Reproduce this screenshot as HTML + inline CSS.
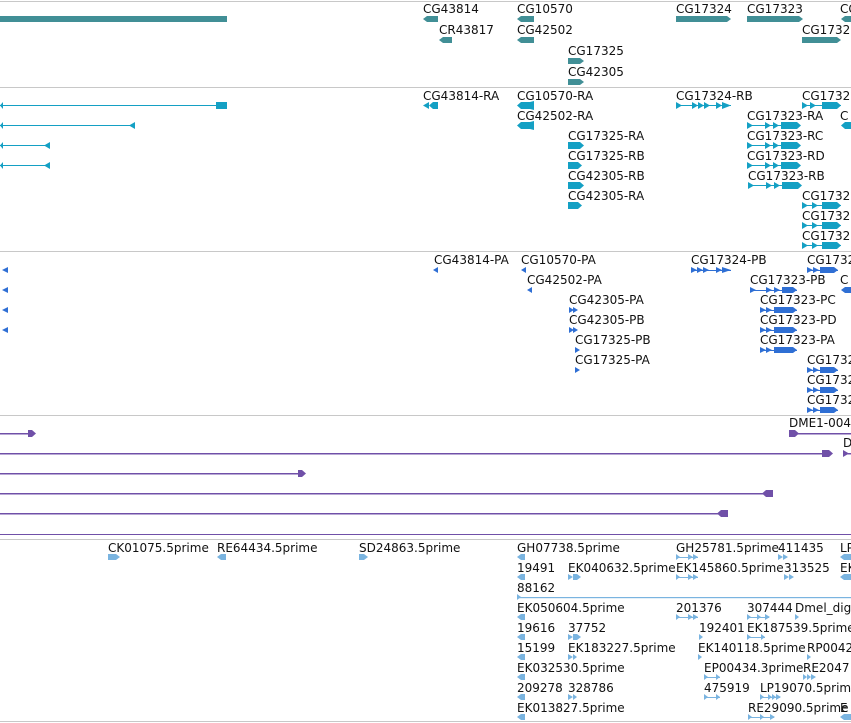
<!DOCTYPE html>
<html><head><meta charset="utf-8"><style>
html,body{margin:0;padding:0;background:#fff;width:851px;height:723px;overflow:hidden}
svg{display:block}
text{font-family:"DejaVu Sans","Liberation Sans",sans-serif;font-size:12px;fill:#111}
</style></head><body>
<svg width="851" height="723" viewBox="0 0 851 723">
<!-- separators -->
<g fill="#c8c8c8">
<rect x="0" y="1" width="851" height="1"/>
<rect x="0" y="87" width="851" height="1"/>
<rect x="0" y="251" width="851" height="1"/>
<rect x="0" y="415" width="851" height="1"/>
<rect x="0" y="539" width="851" height="1"/>
<rect x="0" y="721" width="851" height="1"/>
</g>
<rect x="0" y="534" width="851" height="1" fill="#7050a8"/>

<!-- gene track -->
<g fill="#418f96">
<rect x="0" y="16" width="227" height="6"/>
<polygon points="423,19 427,16 438,16 438,22 427,22"/>
<polygon points="439,40 443,37 452,37 452,43 443,43"/>
<polygon points="517,19 521,16 534,16 534,22 521,22"/>
<polygon points="517,40 521,37 534,37 534,43 521,43"/>
<polygon points="568,58 580,58 584,61 580,64 568,64"/>
<polygon points="568,79 580,79 584,82 580,85 568,85"/>
<polygon points="676,16 727,16 731,19 727,22 676,22"/>
<polygon points="747,16 799,16 803,19 799,22 747,22"/>
<polygon points="841,19 845,16 851,16 851,22 845,22"/>
<polygon points="802,37 837,37 841,40 837,43 802,43"/>
</g>
<text x="423" y="13">CG43814</text>
<text x="439" y="34">CR43817</text>
<text x="517" y="13">CG10570</text>
<text x="517" y="34">CG42502</text>
<text x="568" y="55">CG17325</text>
<text x="568" y="76">CG42305</text>
<text x="676" y="13">CG17324</text>
<text x="747" y="13">CG17323</text>
<text x="840" y="13">CG</text>
<text x="802" y="34">CG1732</text>

<!-- transcript track -->
<g fill="#14a0c4" stroke="none">
<rect x="0" y="105" width="216" height="1"/><rect x="216" y="102" width="11" height="7"/><polygon points="3,102 3,109 0,105.5"/>
<rect x="0" y="125" width="135" height="1"/><polygon points="129,125.5 135,122 135,129"/><polygon points="3,122 3,129 0,125.5"/>
<rect x="0" y="145" width="50" height="1"/><polygon points="44,145.5 50,142 50,149"/><polygon points="3,142 3,149 0,145.5"/>
<rect x="0" y="165" width="50" height="1"/><polygon points="44,165.5 50,162 50,169"/><polygon points="3,162 3,169 0,165.5"/>
<polygon points="423,105.5 429,102 429,109"/><polygon points="429,105.5 433,102 438,102 438,109 433,109"/>
<polygon points="517,105.5 521,102 530,102 534,101 534,110 530,109 521,109"/>
<polygon points="517,125.5 521,122 530,122 534,121 534,130 530,129 521,129"/>
<polygon points="568,142 580,142 584,145.5 580,149 568,149"/>
<polygon points="568,162 578,162 582,165.5 578,169 568,169"/>
<polygon points="568,182 580,182 584,185.5 580,189 568,189"/>
<polygon points="568,202 578,202 582,205.5 578,209 568,209"/>
<rect x="676" y="105" width="55" height="1"/>
<polygon points="676,102 682,105.5 676,109"/><polygon points="692,102 698,105.5 692,109"/><polygon points="698,102 704,105.5 698,109"/><polygon points="704,102 710,105.5 704,109"/><polygon points="716,102 722,105.5 716,109"/><polygon points="722,102 731,105.5 722,109"/>
<rect x="802" y="105" width="39" height="1"/><polygon points="802,102 808,105.5 802,109"/><polygon points="810,102 816,105.5 810,109"/><polygon points="822,102 837,102 841,105.5 837,109 822,109"/>
<polygon points="841,125.5 845,122 851,122 851,129 845,129"/>
</g>
<g fill="#14a0c4">
<rect x="747" y="125" width="50" height="1"/><polygon points="747,122 753,125.5 747,129"/><polygon points="765,122 771,125.5 765,129"/><polygon points="773,122 779,125.5 773,129"/><polygon points="781,122 797,122 801,125.5 797,129 781,129"/>
<rect x="747" y="145" width="50" height="1"/><polygon points="747,142 753,145.5 747,149"/><polygon points="765,142 771,145.5 765,149"/><polygon points="773,142 779,145.5 773,149"/><polygon points="781,142 797,142 801,145.5 797,149 781,149"/>
<rect x="747" y="165" width="50" height="1"/><polygon points="747,162 753,165.5 747,169"/><polygon points="765,162 771,165.5 765,169"/><polygon points="773,162 779,165.5 773,169"/><polygon points="781,162 797,162 801,165.5 797,169 781,169"/>
<rect x="748" y="185" width="50" height="1"/><polygon points="748,182 754,185.5 748,189"/><polygon points="766,182 772,185.5 766,189"/><polygon points="774,182 780,185.5 774,189"/><polygon points="782,182 798,182 802,185.5 798,189 782,189"/>
<rect x="802" y="205" width="39" height="1"/><polygon points="802,202 808,205.5 802,209"/><polygon points="812,202 818,205.5 812,209"/><polygon points="822,202 837,202 841,205.5 837,209 822,209"/>
<rect x="802" y="225" width="39" height="1"/><polygon points="802,222 808,225.5 802,229"/><polygon points="812,222 818,225.5 812,229"/><polygon points="822,222 837,222 841,225.5 837,229 822,229"/>
<rect x="802" y="245" width="39" height="1"/><polygon points="802,242 808,245.5 802,249"/><polygon points="812,242 818,245.5 812,249"/><polygon points="822,242 837,242 841,245.5 837,249 822,249"/>
</g>
<text x="423" y="100">CG43814-RA</text>
<text x="517" y="100">CG10570-RA</text>
<text x="517" y="120">CG42502-RA</text>
<text x="568" y="140">CG17325-RA</text>
<text x="568" y="160">CG17325-RB</text>
<text x="568" y="180">CG42305-RB</text>
<text x="568" y="200">CG42305-RA</text>
<text x="676" y="100">CG17324-RB</text>
<text x="802" y="100">CG1732</text>
<text x="747" y="120">CG17323-RA</text>
<text x="840" y="120">C</text>
<text x="747" y="140">CG17323-RC</text>
<text x="747" y="160">CG17323-RD</text>
<text x="748" y="180">CG17323-RB</text>
<text x="802" y="200">CG1732</text>
<text x="802" y="220">CG1732</text>
<text x="802" y="240">CG1732</text>

<!-- protein track -->
<g fill="#2f6fd4">
<polygon points="2,270 8,267 8,273"/><polygon points="2,290 8,287 8,293"/><polygon points="2,310 8,307 8,313"/><polygon points="2,330 8,327 8,333"/>
<polygon points="433,270 438,267 438,273"/>
<polygon points="521,270 526,267 526,273"/>
<polygon points="527,290 532,287 532,293"/>
<polygon points="569,307 574,310 569,313"/><polygon points="573,307 578,310 573,313"/>
<polygon points="569,327 574,330 569,333"/><polygon points="573,327 578,330 573,333"/>
<polygon points="575,347 580,350 575,353"/>
<polygon points="575,367 580,370 575,373"/>
<rect x="691" y="270" width="40" height="1"/>
<polygon points="691,267 697,270 691,273"/><polygon points="697,267 703,270 697,273"/><polygon points="703,267 709,270 703,273"/><polygon points="716,267 722,270 716,273"/><polygon points="722,267 731,270 722,273"/>
<rect x="807" y="270" width="31" height="1"/><polygon points="807,267 813,270 807,273"/><polygon points="813,267 819,270 813,273"/><polygon points="820,267 834,267 838,270 834,273 820,273"/>
<polygon points="841,290 845,287 851,287 851,293 845,293"/>
<rect x="750" y="290" width="47" height="1"/><polygon points="750,287 756,290 750,293"/><polygon points="766,287 772,290 766,293"/><polygon points="774,287 780,290 774,293"/><polygon points="782,287 793,287 797,290 793,293 782,293"/>
<rect x="760" y="310" width="37" height="1"/><polygon points="760,307 766,310 760,313"/><polygon points="766,307 772,310 766,313"/><polygon points="774,307 793,307 793,307 797,310 793,313 774,313"/>
<rect x="760" y="330" width="37" height="1"/><polygon points="760,327 766,330 760,333"/><polygon points="766,327 772,330 766,333"/><polygon points="774,327 793,327 797,330 793,333 774,333"/>
<rect x="760" y="350" width="37" height="1"/><polygon points="760,347 766,350 760,353"/><polygon points="766,347 772,350 766,353"/><polygon points="774,347 793,347 797,350 793,353 774,353"/>
<rect x="807" y="370" width="31" height="1"/><polygon points="807,367 813,370 807,373"/><polygon points="813,367 819,370 813,373"/><polygon points="820,367 834,367 838,370 834,373 820,373"/>
<rect x="807" y="390" width="31" height="1"/><polygon points="807,387 813,390 807,393"/><polygon points="813,387 819,390 813,393"/><polygon points="820,387 834,387 838,390 834,393 820,393"/>
<rect x="807" y="410" width="31" height="1"/><polygon points="807,407 813,410 807,413"/><polygon points="813,407 819,410 813,413"/><polygon points="820,407 834,407 838,410 834,413 820,413"/>
</g>
<text x="434" y="264">CG43814-PA</text>
<text x="521" y="264">CG10570-PA</text>
<text x="527" y="284">CG42502-PA</text>
<text x="569" y="304">CG42305-PA</text>
<text x="569" y="324">CG42305-PB</text>
<text x="575" y="344">CG17325-PB</text>
<text x="575" y="364">CG17325-PA</text>
<text x="691" y="264">CG17324-PB</text>
<text x="807" y="264">CG1732</text>
<text x="840" y="284">C</text>
<text x="750" y="284">CG17323-PB</text>
<text x="760" y="304">CG17323-PC</text>
<text x="760" y="324">CG17323-PD</text>
<text x="760" y="344">CG17323-PA</text>
<text x="807" y="364">CG1732</text>
<text x="807" y="384">CG1732</text>
<text x="807" y="404">CG1732</text>

<!-- purple track -->
<g fill="#7050a8">
<rect x="0" y="433" width="30" height="1.5"/><polygon points="28,430 32,430 36,433.5 32,437 28,437"/>
<rect x="789" y="433" width="62" height="1.5"/><polygon points="789,430 795,430 799,433.5 795,437 789,437"/>
<rect x="0" y="453" width="828" height="1.5"/><polygon points="822,450 829,450 833,453.5 829,457 822,457"/>
<polygon points="843,450 849,453.5 843,457"/><rect x="843" y="453" width="8" height="1.5"/>
<rect x="0" y="473" width="302" height="1.5"/><polygon points="298,470 302,470 306,473.5 302,477 298,477"/>
<rect x="0" y="493" width="765" height="1.5"/><polygon points="762,493.5 766,490 773,490 773,497 766,497"/>
<rect x="0" y="513" width="722" height="1.5"/><polygon points="717,513.5 721,510 728,510 728,517 721,517"/>
</g>
<text x="789" y="427">DME1-004</text>
<text x="843" y="447">D</text>

<!-- EST track -->
<g fill="#7ab4e0">
<polygon points="108,554 116,554 120,557 116,560 108,560"/>
<polygon points="217,557 221,554 226,554 226,560 221,560"/>
<polygon points="359,554 364,554 368,557 364,560 359,560"/>
<polygon points="517,557 521,554 525,554 525,560 521,560"/>
<rect x="676" y="557" width="22" height="1"/><polygon points="676,554 680,557 676,560"/><polygon points="688,554 693,557 688,560"/><polygon points="693,554 698,557 693,560"/>
<polygon points="778,554 783,557 778,560"/><polygon points="783,554 788,557 783,560"/>
<polygon points="840,557 844,554 851,554 851,560 844,560"/>
<polygon points="517,577 521,574 525,574 525,580 521,580"/>
<polygon points="568,574 573,577 568,580"/><polygon points="573,574 577,574 581,577 577,580 573,580"/>
<rect x="676" y="577" width="22" height="1"/><polygon points="676,574 680,577 676,580"/><polygon points="688,574 693,577 688,580"/><polygon points="693,574 698,577 693,580"/>
<polygon points="784,574 789,577 784,580"/><polygon points="789,574 794,577 789,580"/>
<polygon points="840,577 844,574 851,574 851,580 844,580"/>
<rect x="517" y="597" width="334" height="1.2"/><polygon points="517,594 521,597 517,600"/>
<polygon points="517,617 521,614 525,614 525,620 521,620"/>
<rect x="676" y="617" width="22" height="1"/><polygon points="676,614 680,617 676,620"/><polygon points="688,614 693,617 688,620"/><polygon points="693,614 698,617 693,620"/>
<rect x="747" y="617" width="22" height="1"/><polygon points="747,614 751,617 747,620"/><polygon points="757,614 761,617 757,620"/><polygon points="765,614 770,617 765,620"/>
<polygon points="795,614 799,617 795,620"/>
<polygon points="517,637 521,634 525,634 525,640 521,640"/>
<polygon points="568,634 573,637 568,640"/><polygon points="573,634 577,634 581,637 577,640 573,640"/>
<polygon points="699,634 703,637 699,640"/>
<rect x="747" y="637" width="18" height="1"/><polygon points="747,634 751,637 747,640"/><polygon points="761,634 765,637 761,640"/>
<polygon points="517,657 521,654 525,654 525,660 521,660"/>
<polygon points="568,654 573,657 568,660"/><polygon points="573,654 577,657 573,660"/>
<polygon points="698,654 702,657 698,660"/>
<polygon points="807,654 811,657 807,660"/>
<polygon points="517,677 521,674 525,674 525,680 521,680"/>
<rect x="704" y="677" width="16" height="1"/><polygon points="704,674 708,677 704,680"/><polygon points="716,674 720,677 716,680"/>
<polygon points="803,674 807,677 803,680"/><polygon points="807,674 811,677 807,680"/><polygon points="811,674 816,677 811,680"/>
<polygon points="517,697 521,694 525,694 525,700 521,700"/>
<polygon points="568,694 573,697 568,700"/><polygon points="573,694 577,697 573,700"/>
<rect x="704" y="697" width="16" height="1"/><polygon points="704,694 708,697 704,700"/><polygon points="716,694 720,697 716,700"/>
<rect x="760" y="697" width="20" height="1"/><polygon points="760,694 764,697 760,700"/><polygon points="768,694 772,697 768,700"/><polygon points="772,694 776,697 772,700"/><polygon points="776,694 781,697 776,700"/>
<polygon points="517,717 521,714 525,714 525,720 521,720"/>
<rect x="748" y="717" width="26" height="1"/><polygon points="748,714 752,717 748,720"/><polygon points="760,714 764,717 760,720"/><polygon points="770,714 775,717 770,720"/>
<polygon points="840,717 844,714 851,714 851,720 844,720"/>
</g>
<text x="108" y="552">CK01075.5prime</text>
<text x="217" y="552">RE64434.5prime</text>
<text x="359" y="552">SD24863.5prime</text>
<text x="517" y="552">GH07738.5prime</text>
<text x="676" y="552">GH25781.5prime</text>
<text x="778" y="552">411435</text>
<text x="840" y="552">LP</text>
<text x="517" y="572">19491</text>
<text x="568" y="572">EK040632.5prime</text>
<text x="676" y="572">EK145860.5prime</text>
<text x="784" y="572">313525</text>
<text x="840" y="572">EK</text>
<text x="517" y="592">88162</text>
<text x="517" y="612">EK050604.5prime</text>
<text x="676" y="612">201376</text>
<text x="747" y="612">307444</text>
<text x="795" y="612">Dmel_dig_</text>
<text x="517" y="632">19616</text>
<text x="568" y="632">37752</text>
<text x="699" y="632">192401</text>
<text x="747" y="632">EK187539.5prime</text>
<text x="517" y="652">15199</text>
<text x="568" y="652">EK183227.5prime</text>
<text x="698" y="652">EK140118.5prime</text>
<text x="807" y="652">RP0042</text>
<text x="517" y="672">EK032530.5prime</text>
<text x="704" y="672">EP00434.3prime</text>
<text x="803" y="672">RE2047</text>
<text x="517" y="692">209278</text>
<text x="568" y="692">328786</text>
<text x="704" y="692">475919</text>
<text x="760" y="692">LP19070.5prime</text>
<text x="517" y="712">EK013827.5prime</text>
<text x="748" y="712">RE29090.5prime</text>
<text x="840" y="712">E</text>
</svg>
</body></html>
